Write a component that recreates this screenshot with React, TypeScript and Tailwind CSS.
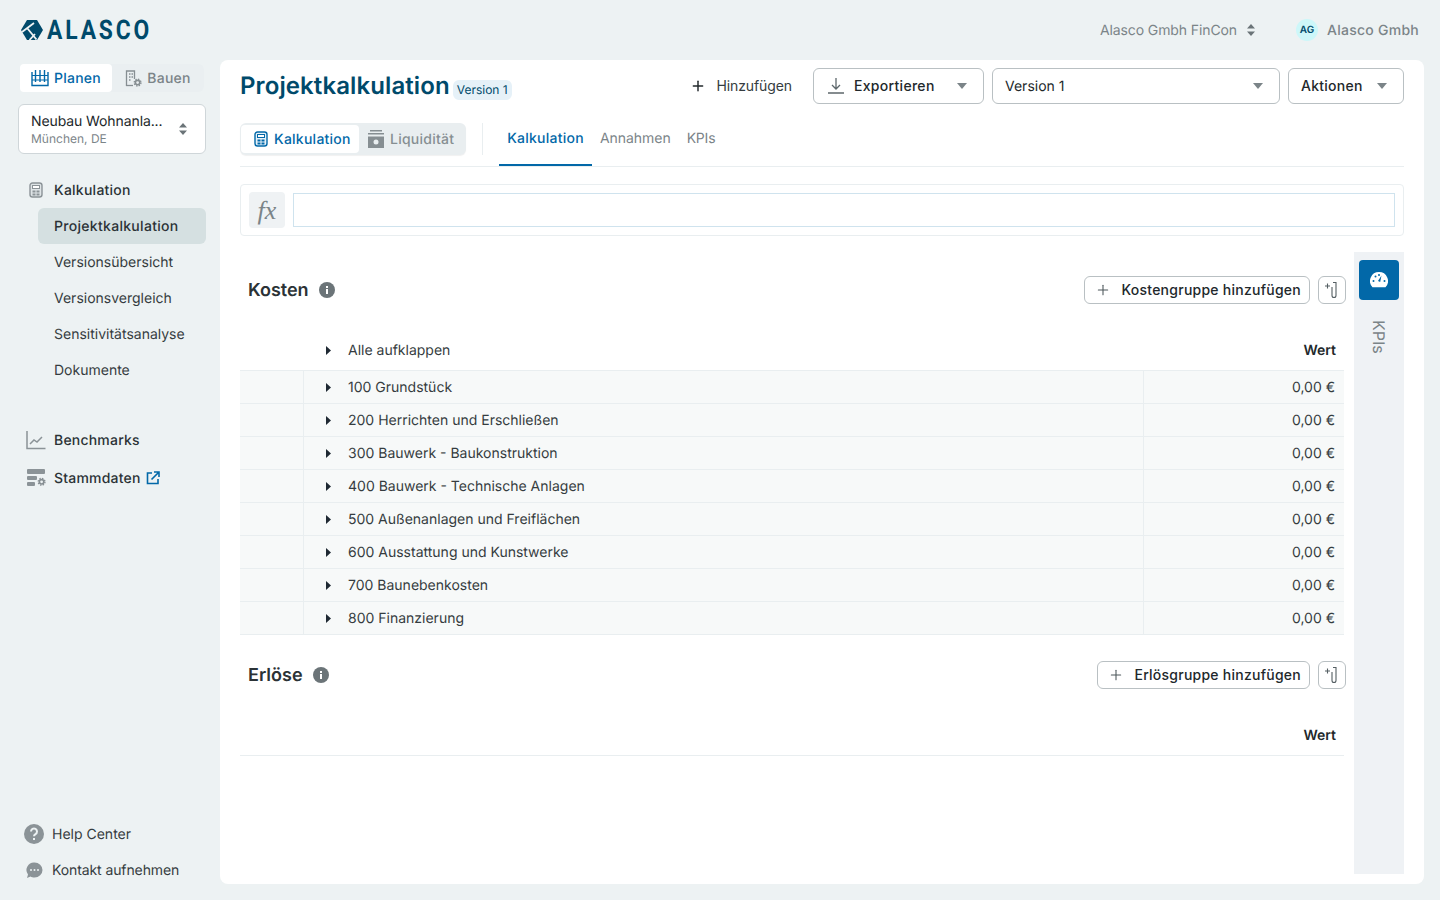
import { Plus } from "lucide-react"

const NAV_ITEMS = ["Versionsübersicht", "Versionsvergleich", "Sensitivitätsanalyse", "Dokumente"]

const COST_GROUPS = [
  "100 Grundstück",
  "200 Herrichten und Erschließen",
  "300 Bauwerk - Baukonstruktion",
  "400 Bauwerk - Technische Anlagen",
  "500 Außenanlagen und Freiflächen",
  "600 Ausstattung und Kunstwerke",
  "700 Baunebenkosten",
  "800 Finanzierung",
]

function Caret({ className = "" }: { className?: string }) {
  return (
    <svg width="10" height="6" viewBox="0 0 10 6" className={className}>
      <path d="M0 0h10L5 6z" fill="currentColor" />
    </svg>
  )
}

function Updown({ className = "" }: { className?: string }) {
  return (
    <svg width="8" height="12" viewBox="0 0 8 12" className={className}>
      <path d="M4 0l4 4.4H0zM4 12L0 7.6h8z" fill="currentColor" />
    </svg>
  )
}

function RowArrow() {
  return (
    <svg width="5" height="9" viewBox="0 0 5 9" className="text-[#1f2933]">
      <path d="M0 0l5 4.500L0 9z" fill="currentColor" />
    </svg>
  )
}

function Logo() {
  return (
    <svg width="22" height="20" viewBox="0 0 22 20">
      <path d="M6 0h10l6 10-6 10H6L0 10z" fill="#004a6b" />
      <path d="M1 12L13 3M6.500 8.500l9 11M8.500 20l5.500-6" stroke="#edf2f3" strokeWidth="1.800" fill="none" />
    </svg>
  )
}

function Gear({ cx, cy }: { cx: number; cy: number }) {
  return (
    <g fill="none" stroke="#868e92">
      <circle cx={cx} cy={cy} r="2.200" strokeWidth="1.600" />
      <circle cx={cx} cy={cy} r="3.400" strokeWidth="1.300" strokeDasharray="1.400 1.270" />
    </g>
  )
}

function CalcIcon({ color, fill }: { color: string; fill: string }) {
  return (
    <svg width="16" height="16" viewBox="0 0 16 16" fill="none">
      <rect x="2" y="1" width="12" height="14" rx="2.500" fill={fill} stroke={color} strokeWidth="1.400" />
      <rect x="4.500" y="3.500" width="7" height="3" stroke={color} strokeWidth="1" fill="#fff" />
      <rect x="4.500" y="8.500" width="3" height="2" fill={color} />
      <rect x="8.500" y="8.500" width="3" height="2" fill={color} />
      <rect x="4.500" y="11.500" width="3" height="2" fill={color} />
      <rect x="8.500" y="11.500" width="3" height="2" fill={color} />
    </svg>
  )
}

function InfoDot() {
  return (
    <svg width="16" height="16" viewBox="0 0 16 16">
      <circle cx="8" cy="8" r="8" fill="#6b7478" />
      <rect x="7" y="7" width="2" height="5" fill="#fff" />
      <rect x="7" y="4" width="2" height="2" fill="#fff" />
    </svg>
  )
}

function ColumnAdd() {
  return (
    <button className="flex h-7 w-7 items-center justify-center rounded-md border border-[#b9c0c3] bg-white">
      <svg width="16" height="18" viewBox="0 0 16 18" fill="none" stroke="#555f63" strokeWidth="1.100">
        <path d="M9 1.500h3v13a2 2 0 0 1-4 0V6" />
        <path d="M3.500 2.500v5M1 5h5" />
      </svg>
    </button>
  )
}

function SectionHead({ title, action }: { title: string; action: string }) {
  return (
    <div className="flex h-7 items-center justify-between pl-2">
      <div className="flex items-center gap-[10px]">
        <h2 className="pt-[2px] text-[18px] font-semibold leading-[26px] text-[#2b3236]">{title}</h2>
        <InfoDot />
      </div>
      <div className="mr-[-2px] flex items-center gap-2">
        <button className="flex h-7 items-center gap-[10px] rounded-md border border-[#b9c0c3] bg-white pl-[10px] pr-2 text-sm font-medium tracking-[0.25px] text-[#22282b]">
          <Plus size={16} strokeWidth={1.600} className="text-[#4d575b]" />
          {action}
        </button>
        <ColumnAdd />
      </div>
    </div>
  )
}

export default function App() {
  return (
    <div className="flex h-[900px] w-[1440px] flex-col overflow-hidden bg-[#edf2f3] font-['Inter',sans-serif] text-sm leading-[21px] text-[#2b3236] [text-rendering:geometricPrecision]">
      <header className="flex h-[60px] shrink-0 items-center justify-between pl-[21px] pr-[21px]">
        <div className="flex items-center gap-1">
          <Logo />
          <span className="origin-left scale-x-[0.845] font-['Liberation_Sans_Narrow','Roboto',sans-serif] text-[27px] font-bold leading-none tracking-[3.400px] text-[#004a6b]">ALASCO</span>
        </div>
        <div className="flex items-center text-[#7b8488]">
          <span className="tracking-[-0.1px]">Alasco Gmbh FinCon</span>
          <Updown className="ml-[10px] text-[#6b7478]" />
          <span className="ml-[41px] flex h-[22px] w-[22px] items-center justify-center rounded-full bg-[#cdf7f9] text-[10px] font-semibold text-[#004a6b]">AG</span>
          <span className="ml-[9px] font-medium tracking-[0.25px]">Alasco Gmbh</span>
        </div>
      </header>

      <div className="flex min-h-0 flex-1 pb-4 pr-4">
        <aside className="flex w-[220px] shrink-0 flex-col">
          <div className="ml-5 mt-1 flex h-7 w-[184px] items-center rounded-md bg-[#eaeff1] text-sm font-medium tracking-[0.25px]">
            <div className="flex h-7 w-[92px] items-center justify-center gap-[5px] rounded bg-white pt-px text-[#0268a8]">
              <svg width="18" height="18" viewBox="0 0 18 18" fill="none" stroke="#0268a8" strokeWidth="1.400" className="-mt-px">
                <path d="M1 3v13.500h16V3" />
                <path d="M1 6.500h16M1 11h16" strokeWidth="1.200" />
                <path d="M4.500 1v12M9 1v12M13.500 1v12" strokeWidth="1.400" />
              </svg>
              Planen
            </div>
            <div className="flex flex-1 items-center justify-center gap-[5px] pt-px text-[#7b8488]">
              <svg width="17" height="17" viewBox="0 0 17 17" fill="none" className="-mt-px">
                <path d="M1.500 16V1h8v8" stroke="#868e92" strokeWidth="1.300" />
                <path d="M1 15.500h7" stroke="#868e92" strokeWidth="1.300" />
                <path d="M4 4h1.500M6.500 4H8M4 7h1.500M6.500 7H8M4 10h1.500" stroke="#868e92" strokeWidth="1.300" />
                <Gear cx={12.600} cy={12.600} />
              </svg>
              Bauen
            </div>
          </div>

          <div className="ml-[18px] mt-3 flex h-[50px] w-[188px] items-center justify-between rounded-md border border-[#cfd6d9] bg-white pl-3 pr-[18px]">
            <div className="pt-[2px]">
              <div className="text-sm leading-[18px] tracking-[-0.1px] text-[#22282b]">Neubau Wohnanla...</div>
              <div className="text-xs leading-4 text-[#7b8488]">München, DE</div>
            </div>
            <Updown className="text-[#6b7478]" />
          </div>

          <nav className="mt-[18px]">
            <div className="flex h-9 items-center gap-[10px] pl-[28px] font-medium tracking-[0.25px]">
              <CalcIcon color="#8b9397" fill="#dfe5e7" />
              Kalkulation
            </div>
            <div className="ml-[38px] w-[168px]">
              <div className="flex h-9 items-center rounded-md bg-[#d5e0e1] pl-4 font-medium tracking-[0.3px]">Projektkalkulation</div>
              {NAV_ITEMS.map((item) => (
                <div key={item} className="flex h-9 items-center pl-4 text-[#353c40]">
                  {item}
                </div>
              ))}
            </div>
            <div className="mt-[34px] flex h-9 items-center gap-2 pl-[26px] font-medium tracking-[0.2px]">
              <svg width="20" height="20" viewBox="0 0 20 20" fill="none" stroke="#8b9397" strokeWidth="1.500">
                <path d="M1 1v17.500h18.500" />
                <path d="M4 14l4-4 3 2 5-5" />
              </svg>
              Benchmarks
            </div>
            <div className="mt-[2px] flex h-9 items-center gap-2 pl-[27px] font-medium tracking-[0.2px]">
              <svg width="19" height="18" viewBox="0 0 19 18" fill="#8b9397">
                <rect x="0" y="0" width="18" height="5" rx="1" />
                <rect x="0" y="7" width="10" height="4" rx="1" />
                <rect x="0" y="13" width="8" height="4" rx="1" />
                <Gear cx={14.600} cy={12.800} />
              </svg>
              <span>Stammdaten</span>
              <svg width="14" height="14" viewBox="0 0 14 14" fill="none" stroke="#0268a8" strokeWidth="1.600" className="-ml-[3px]">
                <path d="M6 2H1.500v10.500H12V8" />
                <path d="M5.500 8.500L12.500 1.500M8 1h5v5" />
              </svg>
            </div>
          </nav>

          <div className="-mb-1 mt-auto text-[#353c40]">
            <div className="flex h-9 items-center gap-[8px] pl-6">
              <svg width="20" height="20" viewBox="0 0 20 20">
                <circle cx="10" cy="10" r="10" fill="#8b9397" />
                <path d="M7 7.500a3 3 0 1 1 4.500 2.600c-1 .6-1.500 1-1.500 2.200" stroke="#edf2f3" strokeWidth="2" fill="none" />
                <rect x="9" y="14" width="2" height="2" fill="#edf2f3" />
              </svg>
              Help Center
            </div>
            <div className="flex h-9 items-center gap-[9px] pl-[26px]">
              <svg width="17" height="17" viewBox="0 0 17 17">
                <path d="M8.500 0.500a8 7.500 0 0 1 0 15c-1.500 0-3-.3-4-1L1 16l1-3.500A7.500 7.500 0 0 1 8.500.500z" fill="#8b9397" />
                <circle cx="5" cy="8" r="1" fill="#edf2f3" />
                <circle cx="8.500" cy="8" r="1" fill="#edf2f3" />
                <circle cx="12" cy="8" r="1" fill="#edf2f3" />
              </svg>
              <span className="tracking-[-0.1px]">Kontakt aufnehmen</span>
            </div>
          </div>
        </aside>

        <main className="flex min-w-0 flex-1 flex-col rounded-lg bg-white px-5">
          <div className="flex h-[52px] shrink-0 items-center justify-between">
            <div className="flex items-center gap-[3px]">
              <h1 className="text-2xl font-semibold leading-8 tracking-[0.1px] text-[#004a6b]">Projektkalkulation</h1>
              <span className="mt-2 rounded-md bg-[#e6f1f8] px-1 text-xs leading-5 text-[#004a6b]">Version 1</span>
            </div>
            <div className="flex items-center">
              <button className="flex h-9 items-center gap-[10px] pb-px pr-[21px] tracking-[-0.1px] text-[#353c40]">
                <Plus size={16} strokeWidth={2.200} className="text-[#22282b]" />
                Hinzufügen
              </button>
              <button className="flex h-9 w-[171px] items-center rounded-md border border-[#b9c0c3] pb-px pl-[14px] pr-[16px] font-medium tracking-[0.3px] text-[#22282b]">
                <svg width="16" height="16" viewBox="0 0 16 16" fill="none" stroke="#5d676b" strokeWidth="1.300">
                  <path d="M8 0v10M4 7l4 4 4-4M0 15h16" />
                </svg>
                <span className="ml-[10px]">Exportieren</span>
                <Caret className="ml-auto text-[#7b8488]" />
              </button>
              <div className="ml-2 flex h-9 w-[288px] items-center justify-between rounded-md border border-[#b9c0c3] pl-3 pr-4 text-[#22282b]">
                Version 1
                <Caret className="text-[#7b8488]" />
              </div>
              <button className="ml-2 flex h-9 w-[116px] items-center justify-between rounded-md border border-[#b9c0c3] pb-px pl-3 pr-[16px] font-medium tracking-[0.25px] text-[#22282b]">
                Aktionen
                <Caret className="text-[#7b8488]" />
              </button>
            </div>
          </div>

          <div className="flex h-[55px] shrink-0 items-center border-b border-[#e9eef0]">
            <div className="flex h-8 w-[226px] items-center rounded-md bg-[#e9eef0] pl-px font-medium tracking-[0.25px] shadow-[0_1px_1px_rgba(0,0,0,0.06)]">
              <div className="flex h-7 w-[118px] items-center gap-[5px] rounded bg-white pl-3 text-[#0268a8]">
                <CalcIcon color="#0268a8" fill="#e6f1f8" />
                Kalkulation
              </div>
              <div className="flex items-center gap-[5px] pl-[8px] text-[#868e92]">
                <svg width="18" height="18" viewBox="0 0 18 18" fill="#868e92">
                  <rect x="3" y="0" width="12" height="1.500" />
                  <rect x="1" y="3" width="16" height="1.500" />
                  <path d="M1 6.500h16V18H1z" />
                  <circle cx="9" cy="12" r="2.500" fill="#e9eef0" />
                </svg>
                Liquidität
              </div>
            </div>
            <div className="ml-4 h-8 w-px bg-[#e9eef0]" />
            <div className="ml-4 flex h-[54px] items-stretch">
              <div className="flex w-[93px] items-center justify-center border-b-2 border-[#0268a8] font-medium tracking-[0.25px] text-[#0268a8]">Kalkulation</div>
              <div className="flex items-center px-2 pb-[2px] tracking-[-0.05px] text-[#7b8488]">Annahmen</div>
              <div className="flex items-center px-2 pb-[2px] tracking-[-0.2px] text-[#7b8488]">KPIs</div>
            </div>
          </div>

          <div className="mt-[17px] flex h-[52px] shrink-0 items-center gap-2 rounded border border-[#e9eef0] pl-2 pr-2">
            <div className="flex h-9 w-9 items-center justify-center rounded bg-[#eff2f4] font-['Liberation_Serif',serif] text-[26px] italic text-[#7b8488]">fx</div>
            <div className="h-[34px] flex-1 border border-[#cfe3ee]" />
          </div>

          <div className="mt-4 flex min-h-0 flex-1 pb-[10px]">
            <div className="min-w-0 flex-1">
              <div className="mt-6">
                <SectionHead title="Kosten" action="Kostengruppe hinzufügen" />
              </div>
              <div className="mt-7 flex h-[39px] items-center border-b border-[#e9eef0] pb-[2px]">
                <div className="flex w-[64px] shrink-0" />
                <div className="flex flex-1 items-center gap-[17px] pl-[22px] text-[#353c40]">
                  <RowArrow />
                  Alle aufklappen
                </div>
                <div className="pr-2 font-semibold text-[#22282b]">Wert</div>
              </div>
              {COST_GROUPS.map((group) => (
                <div key={group} className="flex h-[33px] items-center border-b border-[#e9eef0] bg-[#f7f9f9]">
                  <div className="h-full w-[64px] shrink-0 border-r border-[#e9eef0]" />
                  <div className="flex flex-1 items-center gap-[17px] pl-[22px] text-[#353c40]">
                    <RowArrow />
                    {group}
                  </div>
                  <div className="flex h-full w-[201px] items-center justify-end border-l border-[#e9eef0] pr-[9px] text-[#353c40]">0,00 €</div>
                </div>
              ))}

              <div className="mt-[26px]">
                <SectionHead title="Erlöse" action="Erlösgruppe hinzufügen" />
              </div>
              <div className="mt-[29px] flex h-[38px] items-center justify-end border-b border-[#e9eef0] pb-[3px] pr-2 font-semibold text-[#22282b]">Wert</div>
            </div>

            <div className="ml-[10px] flex w-[50px] shrink-0 flex-col items-center bg-[#eff2f5] pt-2">
              <div className="flex h-10 w-10 items-center justify-center rounded-sm bg-[#0268a8]">
                <svg width="18" height="17" viewBox="0 0 18 17">
                  <path d="M9 0a9 9 0 0 1 6.500 15.200H2.500A9 9 0 0 1 9 0z" fill="#fff" />
                  <path d="M8 9l3.500-5.500L10.200 10z" fill="#0268a8" />
                  <circle cx="3.500" cy="9" r="1" fill="#0268a8" />
                  <circle cx="14.500" cy="9" r="1" fill="#0268a8" />
                  <circle cx="5.500" cy="4.500" r="1" fill="#0268a8" />
                  <circle cx="9" cy="3" r="1" fill="#0268a8" />
                </svg>
              </div>
              <span className="mt-5 text-base leading-5 text-[#7b8488] [writing-mode:vertical-rl]">KPIs</span>
            </div>
          </div>
        </main>
      </div>
    </div>
  )
}
